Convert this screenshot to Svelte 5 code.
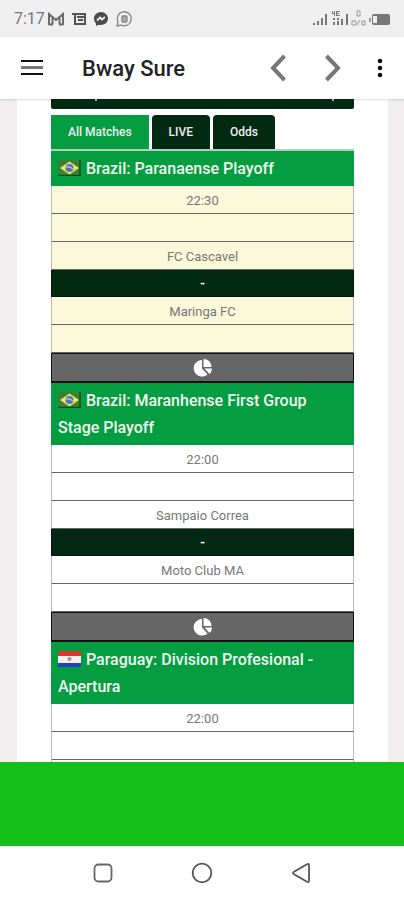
<script>
	const tabs = ['All Matches', 'LIVE', 'Odds'];
	let active = $state('All Matches');

	const leagues = [
		{ flag: 'br', name: 'Brazil: Paranaense Playoff', time: '22:30', home: 'FC Cascavel', away: 'Maringa FC', marked: true },
		{ flag: 'br', name: 'Brazil: Maranhense First Group Stage Playoff', time: '22:00', home: 'Sampaio Correa', away: 'Moto Club MA' },
		{ flag: 'py', name: 'Paraguay: Division Profesional - Apertura', time: '22:00' },
	];
</script>

<svelte:head>
	<title>Bway Sure</title>
</svelte:head>

<div class="phone">
	<div class="status">
		<span class="clock">7:17</span>
		<svg class="mail" width="16" height="14" viewBox="0 0 16 14" fill="none" stroke="#6b6b6b" stroke-width="2">
			<path d="M1 13V2l7 6 7-6v11M4.5 12V6M11.5 12V6M1 12.5h4M11 12.5h4" />
		</svg>
		<svg class="news" width="15" height="14" viewBox="0 0 15 14" fill="none" stroke="#555" stroke-width="2">
			<path d="M0 2h14M3 2v10h10V3M5 5h7M6 8h5" />
		</svg>
		<svg class="chat" width="16" height="16" viewBox="0 0 16 16">
			<path d="M8 1C4 1 1 4 1 7.500c0 2 1 4 2 5V15l2.500-1.200c5 1 9.500-2 9.500-6.300C15 4 12 1 8 1z" fill="#4a4a4a" />
			<path d="M4 9.500l3-3 2 2 3-2.500" fill="none" stroke="#eee" stroke-width="1.8" />
		</svg>
		<svg class="bubble" width="18" height="18" viewBox="0 0 18 18" fill="none" stroke="#888" stroke-width="1.3">
			<path d="M2 16l1-4a7 7 0 1 1 3 3z" />
			<rect x="7" y="6" width="5" height="6" rx="1" fill="#aaa" />
		</svg>
		<svg class="signals" width="78" height="18" viewBox="0 0 78 18" fill="#777">
			<path d="M0 13h2v2H0zM4 11h2v4H4zM8 8h2v7H8zM12 4h2v11h-2z" />
			<path d="M19 1h1v2h1V1h1v5h-1V4h-2zM23 1h4v1h-3v1h2v1h-2v1h3v1h-4zM20 8h2v2h-2zM24 8h2v2h-2zM20 12h2v3h-2zM24 11h2v4h-2zM28 9h2v6h-2zM33 4h2v11h-2z" />
			<path d="M44 1h3v5h-3zM39 11h4v4h-4zM49 11h3v4h-3z" fill="none" stroke="#999" />
			<path d="M44 15l3-5" stroke="#999" />
			<rect x="59" y="4" width="18" height="11" rx="2" />
			<path d="M60 6h4v7h-4z" fill="#eee" />
			<path d="M56 8h2v4h-2z" fill="#999" />
		</svg>
	</div>

	<header>
		<button class="menu" aria-label="Menu">
			<svg width="22" height="16" viewBox="0 0 22 16">
				<path d="M0 1h22M0 14h22" stroke="#111" stroke-width="2" />
				<path d="M0 7.500h22" stroke="#777" stroke-width="3" />
			</svg>
		</button>
		<h1>Bway Sure</h1>
		<button class="arrow" aria-label="Back">
			<svg width="16" height="28" viewBox="0 0 16 28" fill="none" stroke="#777" stroke-width="4">
				<path d="M14.500 2L3 14l11.500 12" />
			</svg>
		</button>
		<button class="arrow" aria-label="Forward">
			<svg width="16" height="28" viewBox="0 0 16 28" fill="none" stroke="#777" stroke-width="4">
				<path d="M1.500 2L13 14 1.500 26" />
			</svg>
		</button>
		<button class="more" aria-label="More options">
			<svg width="6" height="20" viewBox="0 0 6 20" fill="#111">
				<circle cx="3" cy="3" r="2.300" />
				<circle cx="3" cy="10" r="2.300" />
				<circle cx="3" cy="17" r="2.300" />
			</svg>
		</button>
	</header>

	<main>
		<div class="panel">
			<div class="bar"><i></i><i></i></div>
			<nav>
				{#each tabs as tab}
					<button class="tab" class:active={tab === active} onclick={() => (active = tab)}>{tab}</button>
				{/each}
			</nav>
			<table>
				<tbody>
					{#each leagues as league}
						<tr>
							<th>
								<svg class="flag" width="23" height="16" viewBox="0 0 23 16">
									{#if league.flag === 'br'}
										<rect width="23" height="16" fill="#3a8038" />
										<path d="M11.500 1.500L21 8l-9.500 6.500L2 8z" fill="#f0e94c" />
										<circle cx="11.500" cy="8" r="4" fill="#4a72c0" />
										<path d="M8 7q4-1 7 2" fill="none" stroke="#dfe8f5" />
										<path d="M22 0v16M0 15.500h23" stroke="#134d20" stroke-width="1.500" />
									{:else}
										<rect width="23" height="16" fill="#f4f1f2" />
										<rect width="23" height="5" fill="#e0362f" />
										<rect y="12" width="23" height="4" fill="#263fc4" />
										<circle cx="11.500" cy="8" r="2" fill="#b58a7c" />
									{/if}
								</svg>
								{league.name}
							</th>
						</tr>
						<tr class:marked={league.marked}><td>{league.time}</td></tr>
						<tr class:marked={league.marked}><td></td></tr>
						<tr class:marked={league.marked}><td>{league.home ?? ''}</td></tr>
						{#if league.away}
							<tr><td class="score">-</td></tr>
							<tr class:marked={league.marked}><td>{league.away}</td></tr>
							<tr class:marked={league.marked}><td></td></tr>
							<tr>
								<td class="stats">
									<svg width="20" height="18" viewBox="0 0 20 18" fill="#fff">
										<path d="M9 1v8.500l5.500 6A8.300 8.300 0 1 1 9 1z" />
										<path d="M10.500 0a8 8 0 0 1 8 8h-8z" />
										<path d="M11.500 9.500h7.500a8 8 0 0 1-2.500 5.500z" />
									</svg>
								</td>
							</tr>
						{/if}
					{/each}
				</tbody>
			</table>
		</div>
	</main>

	<div class="banner"></div>

	<div class="keys">
		<button aria-label="Recent apps">
			<svg width="22" height="22" viewBox="0 0 22 22" fill="none" stroke="#666" stroke-width="1.800">
				<rect x="2.500" y="2.500" width="17" height="17" rx="4" />
			</svg>
		</button>
		<button aria-label="Home">
			<svg width="22" height="22" viewBox="0 0 22 22" fill="none" stroke="#555" stroke-width="1.800">
				<circle cx="11" cy="11" r="9.300" />
			</svg>
		</button>
		<button aria-label="Back">
			<svg width="22" height="22" viewBox="0 0 22 22" fill="none" stroke="#555" stroke-width="1.800" stroke-linejoin="round">
				<path d="M17 2.200q2-1 2 1v15.600q0 2-2 1L4 12.200q-2-1.200 0-2.400z" />
			</svg>
		</button>
	</div>
</div>

<style>
	:global(body) {
		background: #fff;
	}

	.phone {
		display: flex;
		flex-direction: column;
		height: 100vh;
		font-family: Roboto, 'Liberation Sans', sans-serif;
	}

	button {
		border: 0;
		padding: 0;
		background: none;
		font-family: inherit;
	}

	svg {
		display: block;
	}

	.status {
		display: flex;
		align-items: center;
		height: 37px;
		padding: 0 13px 0 14px;
		background: #efefef;
		color: #777;
		font-size: 16px;
		flex-shrink: 0;
	}

	.mail {
		margin-left: 3px;
	}

	.news {
		margin-left: 8px;
	}

	.chat,
	.bubble {
		margin-left: 6px;
	}

	.signals {
		margin-left: auto;
	}

	header {
		display: flex;
		align-items: center;
		height: 62px;
		padding: 0 21px;
		background: #fff;
		box-shadow: 0 1px 2px rgba(0, 0, 0, 0.15);
		flex-shrink: 0;
		z-index: 1;
	}

	h1 {
		flex: 1;
		margin: 0 0 0 39px;
		font-size: 22px;
		font-weight: 500;
		color: #222;
	}

	.arrow {
		margin-right: 39px;
	}

	.arrow + .arrow {
		margin-right: 36px;
	}

	main {
		flex: 1;
		min-height: 0;
		overflow: hidden;
		padding: 0 16px 0 17px;
		background: #f0eeef;
	}

	.panel {
		padding: 0 34px;
		background: #fff;
	}

	.bar {
		display: flex;
		justify-content: space-between;
		height: 10px;
		padding: 0 20px 0 44px;
		border-radius: 0 0 2px 2px;
		background: #022a12;
	}

	.bar i {
		width: 2px;
		height: 2px;
		background: #bbb;
	}

	nav {
		display: flex;
		gap: 3px;
		margin-top: 6px;
		border-bottom: 2px solid #b5cdb9;
	}

	.tab {
		height: 34px;
		padding: 0 17px;
		border-radius: 4px 4px 0 0;
		background: #022a12;
		color: #eee;
		font-size: 12px;
		font-weight: 500;
	}

	.tab.active {
		border-radius: 0;
		background: #049d42;
	}

	table {
		width: 100%;
		border-collapse: separate;
		border-spacing: 0;
	}

	th {
		padding: 4px 7px;
		background: #049d42;
		color: #f1f8ee;
		font-size: 16px;
		font-weight: 500;
		line-height: 27px;
		text-align: left;
	}

	.flag {
		display: inline-block;
		margin-right: 1px;
		vertical-align: -2px;
	}

	td {
		box-sizing: border-box;
		height: 28px;
		padding: 2px 0 0;
		border: 1px solid #bbb;
		border-width: 0 1px 1px;
		border-bottom-color: #666;
		color: #777;
		font-size: 13px;
		line-height: 20px;
		text-align: center;
	}

	.marked td {
		background: #fcf8da;
	}

	.score {
		height: 27px;
		border-color: #011a0a;
		background: #022a12;
		color: #fff;
		font-weight: 700;
	}

	.stats {
		height: 30px;
		padding: 0;
		border: 1px solid #111;
		border-bottom-width: 2px;
		background: #666;
	}

	.stats svg {
		margin: 0 auto;
	}

	.banner {
		height: 84px;
		background: #15bf17;
		flex-shrink: 0;
	}

	.keys {
		display: flex;
		justify-content: center;
		align-items: center;
		gap: 77px;
		height: 54px;
		background: #fff;
		flex-shrink: 0;
	}
</style>
